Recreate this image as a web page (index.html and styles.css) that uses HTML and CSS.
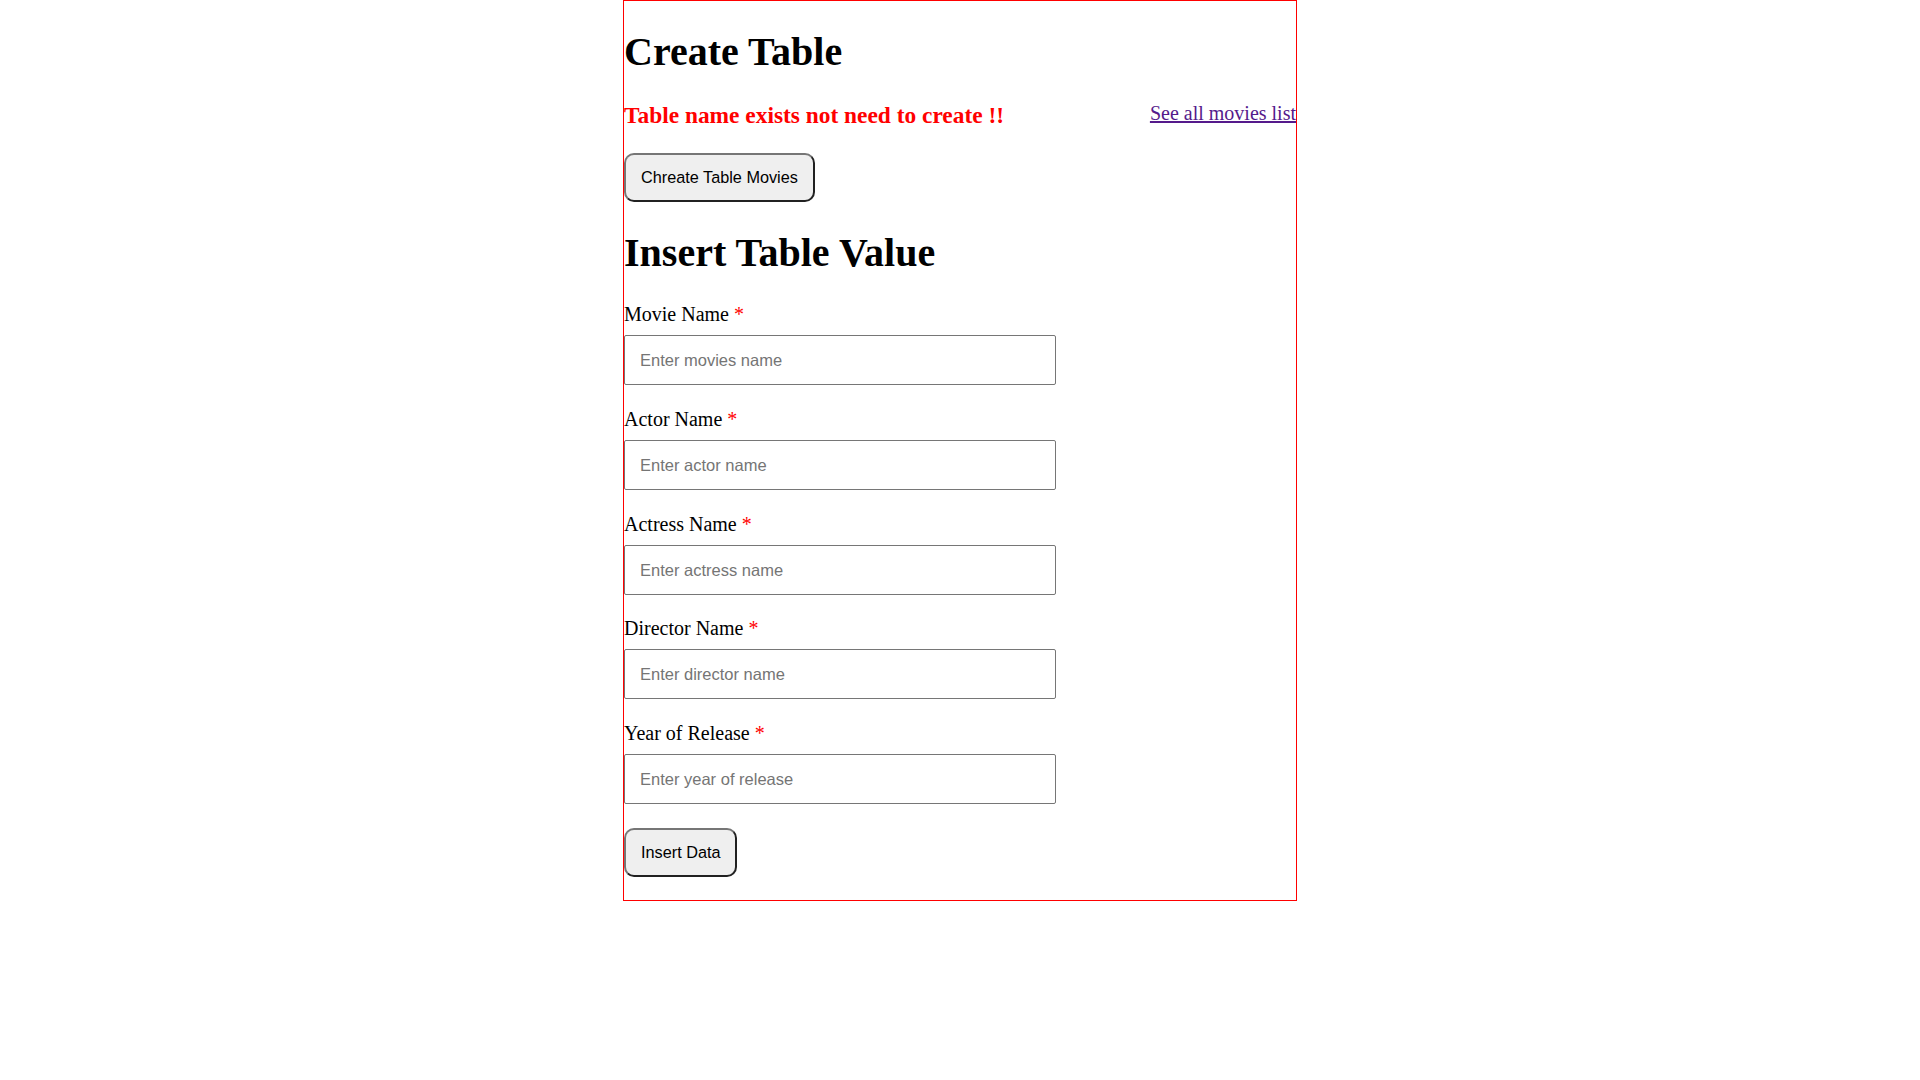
FILE: index.html
```html
<!DOCTYPE html>
<html lang="en">
<head>
<meta charset="utf-8">
<title>Movies</title>
<link rel="stylesheet" href="styles.css">
</head>
<body>
<div class="container">
  <h1 class="title">Create Table</h1>
  <div class="status-row">
    <h3 class="status">Table name exists not need to create !!</h3>
    <a class="list-link" href="#">See all movies list</a>
  </div>
  <button class="btn btn-create" type="button">Chreate Table Movies</button>
  <h1 class="title title-insert">Insert Table Value</h1>
  <form class="form">
    <div class="field">
      <label class="field-label">Movie Name <span class="req">*</span></label>
      <input class="field-input" type="text" placeholder="Enter movies name">
    </div>
    <div class="field">
      <label class="field-label">Actor Name <span class="req">*</span></label>
      <input class="field-input" type="text" placeholder="Enter actor name">
    </div>
    <div class="field">
      <label class="field-label">Actress Name <span class="req">*</span></label>
      <input class="field-input" type="text" placeholder="Enter actress name">
    </div>
    <div class="field">
      <label class="field-label">Director Name <span class="req">*</span></label>
      <input class="field-input" type="text" placeholder="Enter director name">
    </div>
    <div class="field">
      <label class="field-label">Year of Release <span class="req">*</span></label>
      <input class="field-input" type="text" placeholder="Enter year of release">
    </div>
    <button class="btn btn-insert" type="button">Insert Data</button>
  </form>
</div>
</body>
</html>
```
FILE: styles.css
```css
html, body {
  margin: 0;
  padding: 0;
  background: #ffffff;
}

body {
  font-family: "Liberation Serif", "Times New Roman", serif;
  color: #000000;
}

.container {
  width: 672px;
  margin: 0 auto;
  border: 1px solid #ff0000;
  padding-bottom: 23.3px;
  display: flex;
  flex-direction: column;
  align-items: flex-start;
}

.title {
  font-size: 40px;
  font-weight: bold;
  line-height: 45px;
  margin: 28px 0 0 0;
}

.status-row {
  align-self: stretch;
  display: flex;
  justify-content: space-between;
  align-items: flex-start;
  margin-top: 28px;
}

.status {
  margin: 0;
  font-size: 23.4px;
  line-height: 26px;
  font-weight: bold;
  color: #ff0000;
}

.list-link {
  font-size: 20px;
  line-height: 23px;
  color: #551a8b;
  text-decoration: underline;
}

.btn {
  font-family: "Liberation Sans", Arial, sans-serif;
  font-size: 16.25px;
  line-height: 19px;
  color: #000000;
  background: #efefef;
  border: 2px outset #767676;
  border-radius: 10px;
  padding: 13px 15px;
  cursor: pointer;
}

.btn-create {
  margin-top: 25px;
}

.title-insert {
  margin-top: 28px;
}

.form {
  display: flex;
  flex-direction: column;
  align-items: flex-start;
  gap: 22.8px;
  margin: 28px 0 0 0;
}

.field {
  display: flex;
  flex-direction: column;
  align-items: flex-start;
}

.field-label {
  font-size: 20px;
  line-height: 23px;
}

.req {
  color: #ff0000;
}

.field-input {
  box-sizing: content-box;
  margin: 9px 0 0 0;
  width: 400px;
  height: 18px;
  padding: 15px;
  border: 1px solid #767676;
  border-radius: 2px;
  font-family: "Liberation Sans", Arial, sans-serif;
  font-size: 16.5px;
  line-height: 18px;
  color: #000000;
  background: #ffffff;
  outline: none;
}

.field-input::placeholder {
  color: #757575;
}

.btn-insert {
  margin-top: 0.7px;
}
```
